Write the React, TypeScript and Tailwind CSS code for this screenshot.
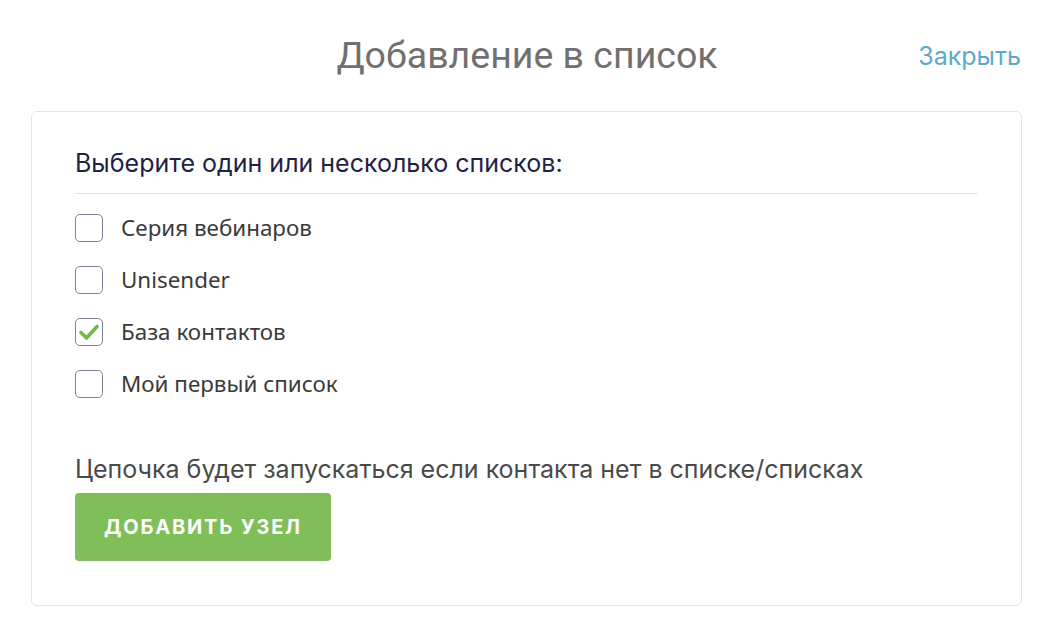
import React, { useState } from 'react';

const LISTS = [
  { id: 'webinars', name: 'Серия вебинаров' },
  { id: 'unisender', name: 'Unisender' },
  { id: 'contacts', name: 'База контактов' },
  { id: 'first', name: 'Мой первый список' },
];

const Checkbox: React.FC<{ checked: boolean; onChange: () => void }> = ({ checked, onChange }) => (
  <button
    type="button"
    onClick={onChange}
    className="w-[28px] h-[28px] shrink-0 rounded-[5px] border border-[#7d7f95] bg-white flex items-center justify-center"
  >
    {checked && (
      <svg width="22" height="18" viewBox="0 0 22 18" fill="none">
        <path d="M3 9.5 L8.5 15 L19 3.5" stroke="#72b84a" strokeWidth="3.6" strokeLinecap="round" strokeLinejoin="round" />
      </svg>
    )}
  </button>
);

export default function App() {
  const [selected, setSelected] = useState<string[]>(['contacts']);

  const toggle = (id: string) =>
    setSelected((s) => (s.includes(id) ? s.filter((x) => x !== id) : [...s, id]));

  return (
    <div className="w-[1054px] h-[636px] bg-white font-['Inter','Noto_Sans',sans-serif]">
      {/* Header */}
      <div className="relative h-[111px] flex items-start justify-center pt-[30px]">
        <h1 className="text-[37.5px] leading-[50px] text-[#707070] font-['Roboto',sans-serif]">Добавление в список</h1>
        <a href="#" className="absolute right-[33px] top-[39px] text-[25px] leading-[34px] text-[#5ba9cb] font-['Inter',sans-serif]">
          Закрыть
        </a>
      </div>

      {/* Card */}
      <div className="mx-[31px] w-[991px] h-[495px] border border-[#e4e4e4] rounded-[6px] px-[43px] pt-[36px]">
        <div className="text-[25px] leading-[30px] text-[#1f2145] pb-[15px] border-b border-[#e4e4e4]">
          Выберите один или несколько списков:
        </div>

        <div className="flex flex-col gap-[24px] pt-[20px]">
          {LISTS.map((l) => (
            <label key={l.id} className="flex items-center gap-[18px] cursor-pointer">
              <Checkbox checked={selected.includes(l.id)} onChange={() => toggle(l.id)} />
              <span className="text-[22.4px] leading-[28px] text-[#3a3a3a] font-['Noto_Sans',sans-serif]">{l.name}</span>
            </label>
          ))}
        </div>

        <div className="mt-[56px] text-[25px] leading-[30px] text-[#4a4a4a]">
          Цепочка будет запускаться если контакта нет в списке/списках
        </div>
        <button className="mt-[9px] w-[256px] h-[68px] rounded-[4px] bg-[#80be5a] text-white text-[20px] font-bold tracking-[1.8px] uppercase">
          Добавить узел
        </button>
      </div>
    </div>
  );
}
